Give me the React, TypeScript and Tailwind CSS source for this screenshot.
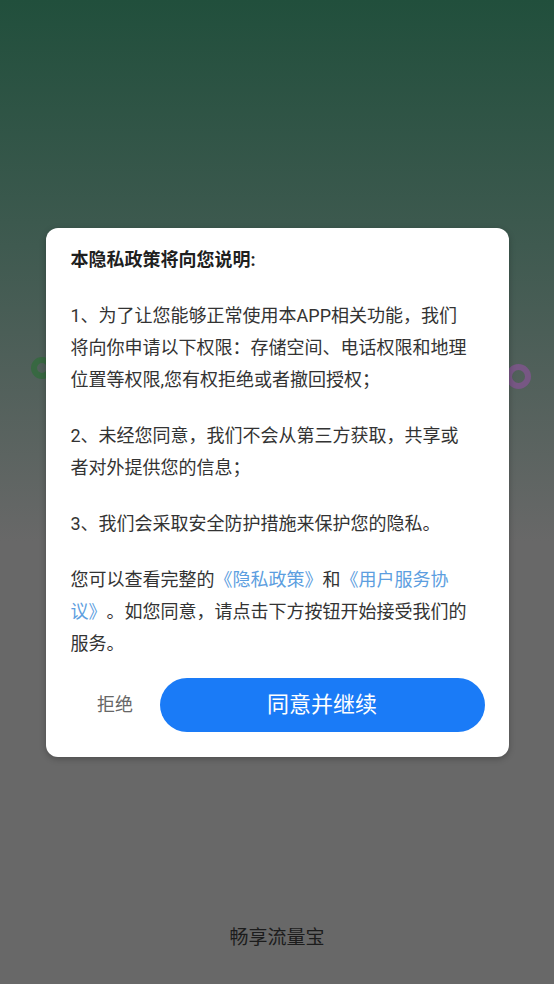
import React from "react";

export default function App() {
  const font = { fontFamily: 'Roboto, "Noto Sans CJK SC", sans-serif' };
  return (
    <div
      className="relative w-[554px] h-[984px] overflow-hidden bg-[linear-gradient(180deg,#214f3c_0%,#3f5a50_25%,#686868_55%,#686868_100%)] [text-spacing-trim:space-all]"
      style={font}
    >
      {/* background page content */}
      <div className="flex flex-col h-full">
        <div className="flex-1" />
        <div className="pb-[32px] text-center text-[19px] leading-[28px] text-[#1c1c1c]">
          畅享流量宝
        </div>
      </div>
      {/* decorative rings behind the dialog */}
      <div className="absolute left-[31px] top-[357px] w-[22px] h-[22px] rounded-full border-[6px] border-[#386842]" />
      <div className="absolute left-[506px] top-[364px] w-[25px] h-[25px] rounded-full border-[6px] border-[#775784]" />

      {/* modal */}
      <div className="absolute inset-0 flex items-center justify-center">
        <div className="w-[463px] bg-white rounded-[12px] shadow-[0_2px_6px_rgba(0,0,0,0.25)] pt-[16px] pb-[25px] pl-[25px] pr-[24px]">
          <div className="pr-[12px] text-[18px] leading-[32px] text-[#333333]">
            <p className="font-bold text-[#1f1f1f]">本隐私政策将向您说明:</p>
            <p className="mt-[24px]">
              1、为了让您能够正常使用本APP相关功能，我们将向你申请以下权限：存储空间、电话权限和地理位置等权限,您有权拒绝或者撤回授权；
            </p>
            <p className="mt-[24px]">
              2、未经您同意，我们不会从第三方获取，共享或者对外提供您的信息；
            </p>
            <p className="mt-[24px]">3、我们会采取安全防护措施来保护您的隐私。</p>
            <p className="mt-[24px]">
              您可以查看完整的<span className="text-[#5c9ee0]">《隐私政策》</span>和
              <span className="text-[#5c9ee0]">《用户服务协议》</span>。如您同意，请点击下方按钮开始接受我们的服务。
            </p>
          </div>
          <div className="mt-[18px] flex items-center">
            <div className="flex-1 text-center text-[18px] text-[#666666]">拒绝</div>
            <button className="w-[325px] h-[54px] rounded-full bg-[#1a7bf7] text-white text-[22px]">
              同意并继续
            </button>
          </div>
        </div>
      </div>
    </div>
  );
}
